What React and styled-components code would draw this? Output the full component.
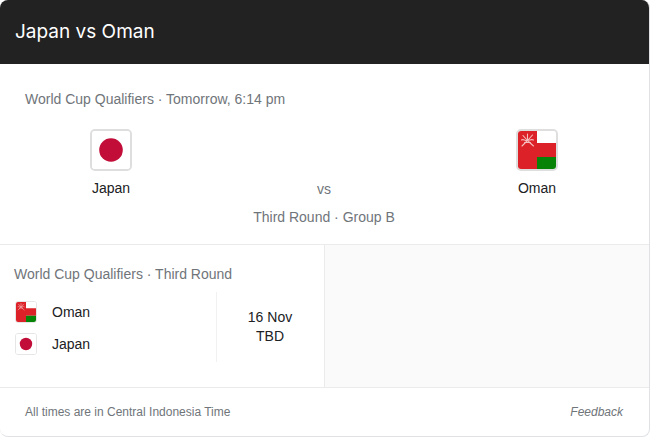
import React from "react";
import styled, { createGlobalStyle } from "styled-components";

const GlobalStyle = createGlobalStyle`
  * { box-sizing: border-box; }
  body {
    margin: 0;
    background: #fff;
    color: #202124;
    font: 14px/20px "Liberation Sans", Arial, sans-serif;
  }
`;

const Card = styled.main`
  margin-right: 1px;
  border: 1px solid #dfe1e5;
  border-width: 0 1px 1px 0;
  border-radius: 8px;
  overflow: hidden;
`;

const Header = styled.header`
  display: flex;
  align-items: center;
  height: 64px;
  padding: 0 15px;
  background: #222;
`;

const Title = styled.h1`
  margin: 0;
  color: #fff;
  font: 400 19px/28px Inter, sans-serif;
`;

const Match = styled.section`
  padding: 25px 26px 17px 25px;
  border-bottom: 1px solid #ebebeb;
`;

const Caption = styled.div`
  color: #70757a;
  text-align: ${(p) => (p.$center ? "center" : "left")};
`;

const Versus = styled.div`
  display: grid;
  grid-template-columns: 172px 1fr 172px;
  align-items: end;
  padding: 20px 0 8px;
`;

const Team = styled.div`
  display: flex;
  flex-direction: column;
  align-items: center;
  gap: 7px;
  padding-bottom: 1px;
`;

const FlagFrame = styled.svg`
  display: block;
  flex: none;
  width: ${(p) => p.$size}px;
  height: ${(p) => p.$size}px;
  border: ${(p) => (p.$size > 30 ? "2px solid #dedede" : "1px solid #e6e6e6")};
  border-radius: ${(p) => (p.$size > 30 ? 5 : 3)}px;
`;

const Schedule = styled.section`
  display: grid;
  grid-template-columns: 1fr 1fr;
  background: #fafafa;
  border-bottom: 1px solid #ebebeb;
`;

const Fixture = styled.article`
  padding: 19px 0 23px 14px;
  background: #fff;
  border-right: 1px solid #ebebeb;
`;

const FixtureBody = styled.div`
  display: grid;
  grid-template-columns: 1fr 108px;
  margin-top: 8px;
`;

const TeamList = styled.ul`
  display: flex;
  flex-direction: column;
  gap: 10px;
  margin: 0;
  padding: 9px 0;
  list-style: none;
`;

const TeamRow = styled.li`
  display: flex;
  align-items: center;
  gap: 15px;
  height: 22px;
  padding-left: 1px;
`;

const Kickoff = styled.div`
  display: flex;
  flex-direction: column;
  justify-content: center;
  height: 70px;
  border-left: 1px solid #f1f1f1;
  line-height: 19px;
  text-align: center;
`;

const Footer = styled.footer`
  display: flex;
  align-items: center;
  justify-content: space-between;
  height: 48px;
  padding: 0 26px 0 25px;
  color: #70757a;
  font-size: 12px;
`;

const FeedbackLink = styled.a`
  color: inherit;
  font-style: italic;
  text-decoration: none;
`;

function JapanFlag({ size }) {
  return (
    <FlagFrame $size={size} viewBox="0 0 38 38" aria-hidden="true">
      <path fill="#fff" d="M0 0h38v38H0z" />
      <circle cx="19" cy="19" r="11.8" fill="#c20d38" />
    </FlagFrame>
  );
}

function OmanFlag({ size }) {
  return (
    <FlagFrame $size={size} viewBox="0 0 38 38" aria-hidden="true">
      <path fill="#fff" d="M0 0h38v38H0z" />
      <path fill="#dc2128" d="M0 0h19v12h19v14H19v12H0z" />
      <path fill="#078307" d="M19 26h19v12H19z" />
      <g fill="none" stroke="#f5bdbd" strokeWidth="1.1" strokeLinecap="round">
        <path d="M9.500 3v7M5 4.500l3.500 4M14.500 4l-4 4.500M3.500 9c2-1.500 3 1 6 .500s4-1.500 6-.500M8.500 10.500L4 15M10.500 10.500l5 4.500M6.500 11.500h6" />
      </g>
    </FlagFrame>
  );
}

export default function App() {
  return (
    <>
      <GlobalStyle />
      <Card>
        <Header>
          <Title>Japan vs Oman</Title>
        </Header>
        <Match>
          <Caption>World Cup Qualifiers · Tomorrow, 6:14 pm</Caption>
          <Versus>
            <Team>
              <JapanFlag size={42} />
              <span>Japan</span>
            </Team>
            <Caption $center>vs</Caption>
            <Team>
              <OmanFlag size={42} />
              <span>Oman</span>
            </Team>
          </Versus>
          <Caption $center>Third Round · Group B</Caption>
        </Match>
        <Schedule>
          <Fixture>
            <Caption>World Cup Qualifiers · Third Round</Caption>
            <FixtureBody>
              <TeamList>
                <TeamRow>
                  <OmanFlag size={22} />
                  <span>Oman</span>
                </TeamRow>
                <TeamRow>
                  <JapanFlag size={22} />
                  <span>Japan</span>
                </TeamRow>
              </TeamList>
              <Kickoff>
                <span>16 Nov</span>
                <span>TBD</span>
              </Kickoff>
            </FixtureBody>
          </Fixture>
        </Schedule>
        <Footer>
          <span>All times are in Central Indonesia Time</span>
          <FeedbackLink href="#feedback">Feedback</FeedbackLink>
        </Footer>
      </Card>
    </>
  );
}
